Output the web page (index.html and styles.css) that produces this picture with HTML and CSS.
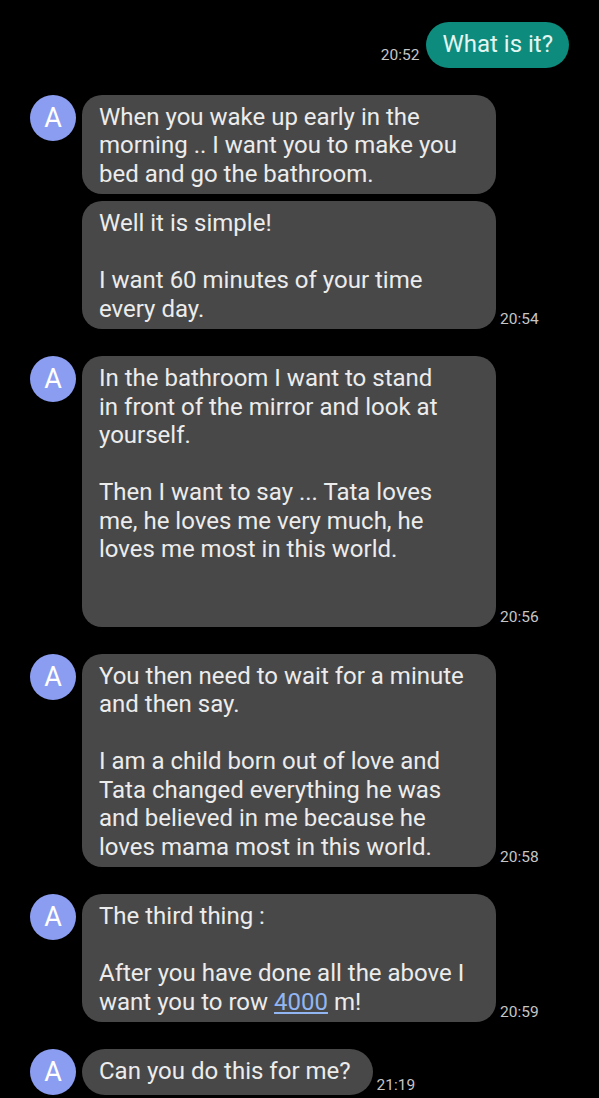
FILE: index.html
```html
<!DOCTYPE html>
<html lang="en">
<head>
  <meta charset="UTF-8" />
  <title>Chat</title>
  <link rel="stylesheet" href="styles.css">
</head>
<body>
  <div class="chat">
    <div class="row sent">
      <span class="time">20:52</span>
      <div class="bubble out">What is it?</div>
    </div>

    <div class="row">
      <div class="avatar">A</div>
      <div class="stack">
        <div class="line">
          <div class="bubble in">When you wake up early in the<br>morning .. I want you to make you<br>bed and go the bathroom.</div>
        </div>
        <div class="line">
          <div class="bubble in">Well it is simple!<br><br>I want 60 minutes of your time<br>every day.</div>
          <span class="time">20:54</span>
        </div>
      </div>
    </div>

    <div class="row">
      <div class="avatar">A</div>
      <div class="line">
        <div class="bubble in">In the bathroom I want to stand<br>in front of the mirror and look at<br>yourself.<br><br>Then I want to say ... Tata loves<br>me, he loves me very much, he<br>loves me most in this world.<br><br><br></div>
        <span class="time">20:56</span>
      </div>
    </div>

    <div class="row">
      <div class="avatar">A</div>
      <div class="line">
        <div class="bubble in">You then need to wait for a minute<br>and then say.<br><br>I am a child born out of love and<br>Tata changed everything he was<br>and believed in me because he<br>loves mama most in this world.</div>
        <span class="time">20:58</span>
      </div>
    </div>

    <div class="row">
      <div class="avatar">A</div>
      <div class="line">
        <div class="bubble in">The third thing :<br><br>After you have done all the above I<br>want you to row <a class="num" href="#">4000</a> m!</div>
        <span class="time">20:59</span>
      </div>
    </div>

    <div class="row">
      <div class="avatar">A</div>
      <div class="line">
        <div class="bubble in short">Can you do this for me?</div>
        <span class="time">21:19</span>
      </div>
    </div>
  </div>
</body>
</html>
```

FILE: styles.css
```css
body { margin: 0; background: #000; font-family: Roboto, 'Noto Sans', sans-serif; color: #ececec; }
.chat { padding: 22px 30px 0 30px; display: flex; flex-direction: column; gap: 27px; }
.row { display: flex; align-items: flex-start; gap: 6px; }
.row.sent { justify-content: flex-end; align-items: flex-end; gap: 7px; }
.stack { display: flex; flex-direction: column; gap: 7px; }
.line { display: flex; align-items: flex-end; gap: 4px; }
.avatar { width: 46px; height: 46px; border-radius: 50%; background: #8b9df1; color: #fff; font-size: 27px; display: flex; align-items: center; justify-content: center; flex-shrink: 0; }
.bubble { font-size: 24px; line-height: 28.5px; }
.bubble.in { background: #484848; width: 414px; box-sizing: border-box; padding: 8px 17px 6px 17px; border-radius: 20px; }
.bubble.in.short { width: auto; padding: 8px 22px 9px 17px; border-radius: 23px; }
.bubble.out { background: #0d8b7d; color: #e3f5f1; padding: 8px 16px 9px 16px; border-radius: 23px; }
.time { font-size: 15.5px; color: #c6c6c6; line-height: 18px; margin-bottom: 1px; }
.row.sent .time { margin-bottom: 4px; }
.num { color: #92b6f2; text-decoration: underline; }
```
